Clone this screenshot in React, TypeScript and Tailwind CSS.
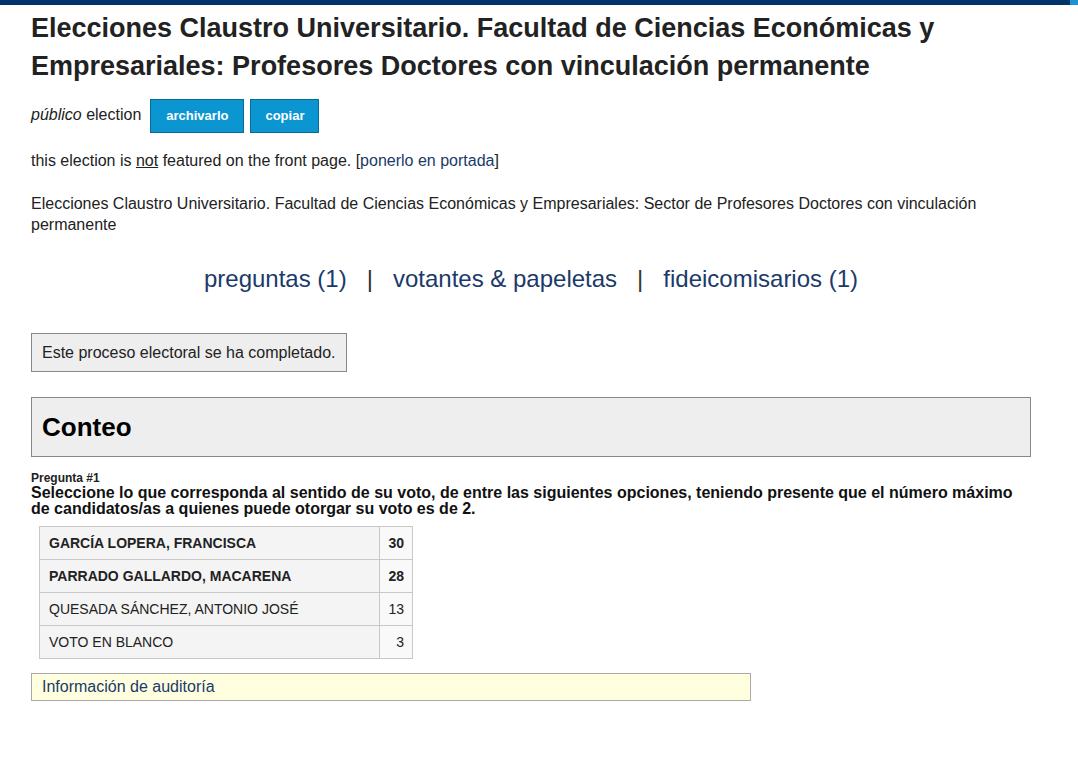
const rows = [
  { name: "GARCÍA LOPERA, FRANCISCA", votes: 30, bold: true },
  { name: "PARRADO GALLARDO, MACARENA", votes: 28, bold: true },
  { name: "QUESADA SÁNCHEZ, ANTONIO JOSÉ", votes: 13, bold: false },
  { name: "VOTO EN BLANCO", votes: 3, bold: false },
]

export default function App() {
  return (
    <div className="min-h-screen bg-white text-[#222] font-['Liberation_Sans',Arial,sans-serif]">
      <div className="flex h-[5px]">
        <div className="flex-1 bg-[#00346b]" />
        <div className="w-[8px] bg-[#1c93d2]" />
      </div>

      <div className="w-[1000px] ml-[31px]">
        <h1 className="mt-[4px] text-[27px] leading-[38px] font-bold text-[#222]">
          Elecciones Claustro Universitario. Facultad de Ciencias Económicas y Empresariales: Profesores Doctores con vinculación permanente
        </h1>

        <div className="mt-[14px] flex items-center text-[16px]">
          <span className="-mt-[2px]"><em>público</em> election</span>
          <button className="ml-[9px] h-[34px] px-[15px] bg-[#0b96d1] border border-[#0a6a96] text-white text-[13px] font-bold">
            archivarlo
          </button>
          <button className="ml-[6px] h-[34px] px-[14px] bg-[#0b96d1] border border-[#0a6a96] text-white text-[13px] font-bold">
            copiar
          </button>
        </div>

        <p className="mt-[17px] text-[16px] leading-[21px]">
          this election is <u>not</u> featured on the front page. [<a className="text-[#1b3a6a]">ponerlo en portada</a>]
        </p>

        <p className="mt-[22px] text-[16px] leading-[21px]">
          Elecciones Claustro Universitario. Facultad de Ciencias Económicas y Empresariales: Sector de Profesores Doctores con vinculación permanente
        </p>

        <div className="mt-[29px] flex justify-center items-center text-[24px] leading-[30px] text-[#1b3a6a]">
          <a>preguntas (1)</a>
          <span className="mx-[20px] text-[#333]">|</span>
          <a>votantes &amp; papeletas</a>
          <span className="mx-[20px] text-[#333]">|</span>
          <a>fideicomisarios (1)</a>
        </div>

        <div className="mt-[39px] inline-block border border-[#888] bg-[#eeeeee] px-[10px] py-[9px] text-[16px] leading-[19px]">
          Este proceso electoral se ha completado.
        </div>

        <div className="mt-[25px] border border-[#888] bg-[#eeeeee] h-[60px] flex items-center px-[10px]">
          <h2 className="text-[26px] font-bold text-black">Conteo</h2>
        </div>

        <div className="mt-[15px] text-[12px] leading-[13px] font-bold text-[#222]">Pregunta #1</div>
        <div className="text-[16px] leading-[16px] font-bold text-[#111]">
          Seleccione lo que corresponda al sentido de su voto, de entre las siguientes opciones, teniendo presente que el número máximo de candidatos/as a quienes puede otorgar su voto es de 2.
        </div>

        <table className="mt-[9px] ml-[8px] border-collapse text-[14px] text-[#222]">
          <tbody>
            {rows.map((r) => (
              <tr key={r.name} className={r.bold ? "font-bold" : ""}>
                <td className="w-[340px] h-[33px] border border-[#c8c8c8] bg-[#f4f4f4] px-[9px]">{r.name}</td>
                <td className="w-[33px] h-[33px] border border-[#c8c8c8] bg-[#f9f9f9] px-[8px] text-right">{r.votes}</td>
              </tr>
            ))}
          </tbody>
        </table>

        <div className="mt-[14px] w-[720px] h-[28px] border border-[#aaa] bg-[#ffffe0] px-[10px] flex items-center text-[16px] text-[#1b3a6a]">
          Información de auditoría
        </div>
      </div>
    </div>
  )
}
